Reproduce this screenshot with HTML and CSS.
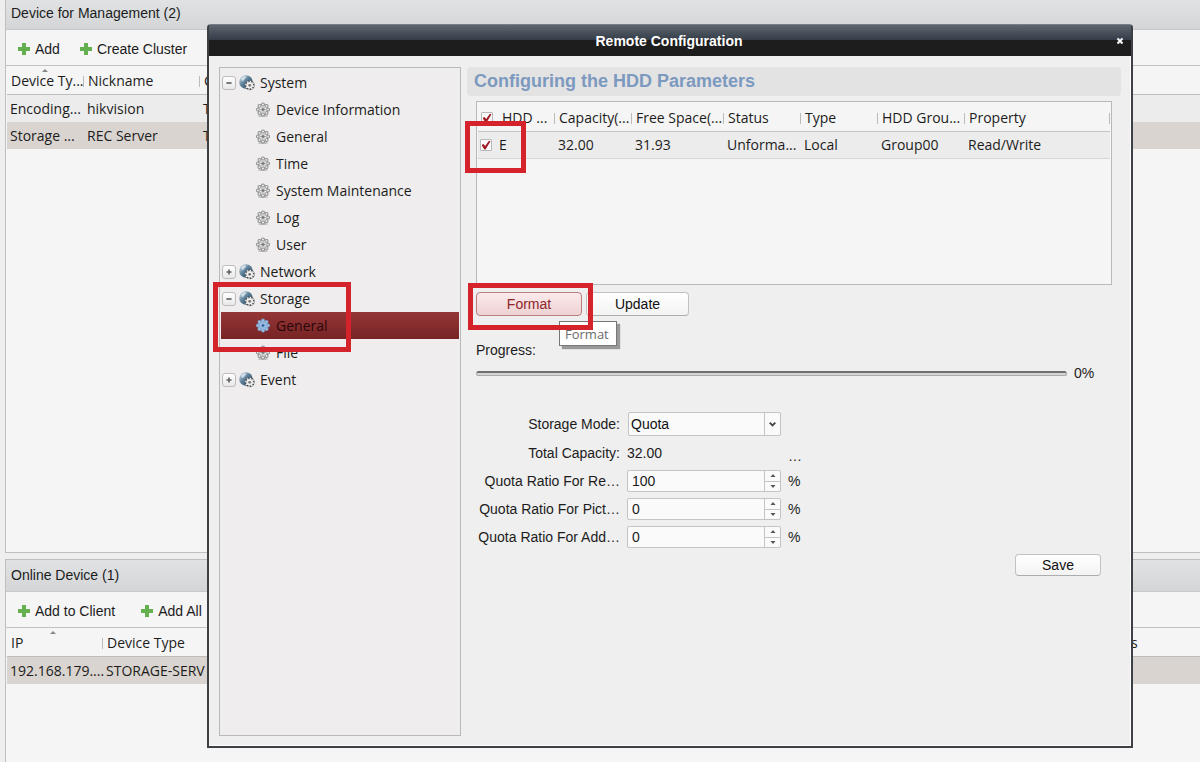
FILE: index.html
```html
<!DOCTYPE html>
<html lang="en">
  <head>
    <meta charset="utf-8">
    <title>Remote Configuration</title>
    <link rel="stylesheet" href="styles.css">
  </head>
  <body>

	<svg class="defs" width="0" height="0">
		<linearGradient id="globeFill" x1="0" y1="0" x2="1" y2="1">
			<stop offset="0" stop-color="#dce8f0" />
			<stop offset="0.45" stop-color="#5c7f99" />
			<stop offset="1" stop-color="#223f56" />
		</linearGradient>
		<symbol id="plus" viewBox="0 0 12 12">
			<path d="M4 0h4v4h4v4H8v4H4V8H0V4h4z" />
		</symbol>
		<symbol id="gear" viewBox="0 0 16 16">
			<ellipse class="gear-shadow" cx="8" cy="14" rx="5" ry="1" />
			<circle class="gear-edge" cx="8" cy="7.5" r="5" pathLength="80" />
			<circle class="gear-teeth" cx="8" cy="7.5" r="5" pathLength="80" />
			<circle class="gear-body" cx="8" cy="7.5" r="4" />
			<path class="gear-spokes" d="M8 4v7M4.500 7.5h7M5.500 5l5 5M10.500 5l-5 5" />
			<circle class="gear-hub" cx="8" cy="7.5" r="1.3" />
		</symbol>
		<symbol id="globe" viewBox="0 0 16 16">
			<circle cx="7" cy="7" r="6.8" fill="url(#globeFill)" />
			<path d="M2 3.5q2-2.5 5-2.3q1 1.5-1 2.3q-1 2.5-3 2.5z" fill="#eef5f9" opacity="0.7" />
			<circle cx="10.7" cy="10.3" r="4.9" fill="#4a4f54" />
			<circle cx="10.7" cy="10.3" r="3.9" fill="none" stroke="#f0f0f0" stroke-width="1.5" stroke-dasharray="5 5" pathLength="80" />
			<circle cx="10.7" cy="10.3" r="3.3" fill="#f0f0f0" />
			<circle cx="10.7" cy="10.3" r="1.4" fill="#777" />
		</symbol>
	</svg>

	<main class="page">
		<section class="panel">
			<h2 class="panel-title first">Device for Management (2)</h2>
			<div class="toolbar">
				<button><svg class="plus"><use href="#plus" /></svg>Add</button>
				<button><svg class="plus"><use href="#plus" /></svg>Create Cluster</button>
			</div>
			<table class="list devices">
				<tr><th class="sorted">Device Ty...</th><th>Nickname</th><th>C</th></tr>
				<tr><td>Encoding...</td><td>hikvision</td><td>T</td></tr>
				<tr class="picked"><td>Storage ...</td><td>REC Server</td><td>T</td></tr>
			</table>
		</section>
		<section class="panel">
			<h2 class="panel-title">Online Device (1)</h2>
			<div class="toolbar wide">
				<button><svg class="plus"><use href="#plus" /></svg>Add to Client</button>
				<button><svg class="plus"><use href="#plus" /></svg>Add All</button>
			</div>
			<table class="list online">
				<tr><th class="sorted">IP</th><th>Device Type</th><th>s</th></tr>
				<tr class="picked"><td>192.168.179....</td><td>STORAGE-SERV</td><td></td></tr>
			</table>
		</section>
	</main>

	<div class="overlay">
		<div class="dialog" role="dialog" aria-labelledby="dialogTitle">
			<header class="titlebar">
				<h1 id="dialogTitle">Remote Configuration</h1>
				<button class="close" aria-label="Close"><svg viewBox="0 0 8 8"><path d="M1.5 1.5l5 5M6.5 1.5l-5 5" /></svg></button>
			</header>
			<div class="dialog-body">

				<nav class="tree">
					<ul>
						<li>
							<div class="node"><button class="toggle" aria-label="Collapse System"><svg viewBox="0 0 14 14"><path d="M4 7h6" /></svg></button><svg class="icon"><use href="#globe" /></svg><a href="#system">System</a></div>
							<ul>
								<li class="leaf"><svg class="icon"><use href="#gear" /></svg><a href="#info">Device Information</a></li>
								<li class="leaf"><svg class="icon"><use href="#gear" /></svg><a href="#general">General</a></li>
								<li class="leaf"><svg class="icon"><use href="#gear" /></svg><a href="#time">Time</a></li>
								<li class="leaf"><svg class="icon"><use href="#gear" /></svg><a href="#maintenance">System Maintenance</a></li>
								<li class="leaf"><svg class="icon"><use href="#gear" /></svg><a href="#log">Log</a></li>
								<li class="leaf"><svg class="icon"><use href="#gear" /></svg><a href="#user">User</a></li>
							</ul>
						</li>
						<li>
							<div class="node"><button class="toggle" aria-label="Expand Network"><svg viewBox="0 0 14 14"><path d="M4 7h6M7 4v6" /></svg></button><svg class="icon"><use href="#globe" /></svg><a href="#network">Network</a></div>
						</li>
						<li class="marked">
							<div class="node"><button class="toggle" aria-label="Collapse Storage"><svg viewBox="0 0 14 14"><path d="M4 7h6" /></svg></button><svg class="icon"><use href="#globe" /></svg><a href="#storage">Storage</a></div>
							<ul>
								<li class="leaf active"><svg class="icon"><use href="#gear" /></svg><a href="#storage-general">General</a></li>
								<li class="leaf"><svg class="icon"><use href="#gear" /></svg><a href="#file">File</a></li>
							</ul>
							<span class="mark mark-tree"></span>
						</li>
						<li>
							<div class="node"><button class="toggle" aria-label="Expand Event"><svg viewBox="0 0 14 14"><path d="M4 7h6M7 4v6" /></svg></button><svg class="icon"><use href="#globe" /></svg><a href="#event">Event</a></div>
						</li>
					</ul>
				</nav>

				<div class="content">
					<h2 class="heading">Configuring the HDD Parameters</h2>

					<div class="settings">
						<div class="hdd-box">
							<table class="list hdd">
								<tr>
									<th><label><input type="checkbox" checked>HDD ...</label></th>
									<th>Capacity(...</th><th>Free Space(...</th><th>Status</th><th>Type</th><th>HDD Grou...</th><th>Property</th>
								</tr>
								<tr>
									<td class="marked"><label><input type="checkbox" checked>E</label><span class="mark mark-check"></span></td>
									<td>32.00</td><td>31.93</td><td>Unforma...</td><td>Local</td><td>Group00</td><td>Read/Write</td>
								</tr>
							</table>
						</div>

						<div class="actions marked">
							<button class="btn hot">Format</button>
							<button class="btn">Update</button>
							<span class="tooltip" role="tooltip">Format</span>
							<span class="mark mark-format"></span>
						</div>

						<div class="progress-label">Progress:</div>
						<div class="progress">
							<div class="bar" role="progressbar" aria-label="Progress" aria-valuenow="0"></div>
							<span>0%</span>
						</div>

						<form class="quota">
							<label for="mode">Storage Mode:</label>
							<div class="select">
								<select id="mode"><option>Quota</option></select>
								<svg viewBox="0 0 16 22"><path d="M5 9.5l3 3l3-3" /></svg>
							</div>
							<span></span>

							<span class="name">Total Capacity:</span>
							<span class="total">32.00</span>
							<span class="dots">…</span>

							<label for="record">Quota Ratio For Re…</label>
							<div class="spin">
								<input id="record" type="text" value="100">
								<div><button type="button" aria-label="Up"><svg viewBox="0 0 6 4"><path d="M3 0l2.5 3h-5z" /></svg></button><button type="button" aria-label="Down"><svg viewBox="0 0 6 4"><path d="M3 4l2.5-3h-5z" /></svg></button></div>
							</div>
							<span>%</span>

							<label for="picture">Quota Ratio For Pict…</label>
							<div class="spin">
								<input id="picture" type="text" value="0">
								<div><button type="button" aria-label="Up"><svg viewBox="0 0 6 4"><path d="M3 0l2.5 3h-5z" /></svg></button><button type="button" aria-label="Down"><svg viewBox="0 0 6 4"><path d="M3 4l2.5-3h-5z" /></svg></button></div>
							</div>
							<span>%</span>

							<label for="additional">Quota Ratio For Add…</label>
							<div class="spin">
								<input id="additional" type="text" value="0">
								<div><button type="button" aria-label="Up"><svg viewBox="0 0 6 4"><path d="M3 0l2.5 3h-5z" /></svg></button><button type="button" aria-label="Down"><svg viewBox="0 0 6 4"><path d="M3 4l2.5-3h-5z" /></svg></button></div>
							</div>
							<span>%</span>
						</form>

						<div class="save-row"><button class="btn save">Save</button></div>
					</div>
				</div>

			</div>
		</div>
	</div>

  </body>
</html>
```
FILE: styles.css
```css
* { box-sizing: border-box; }
body { margin: 0; background: #efeeee; color: #1c1c1c; font: 14px/20px "Liberation Sans", Arial, sans-serif; }
ul, h1, h2 { margin: 0; padding: 0; list-style: none; }
button, input, select { font: inherit; color: inherit; margin: 0; padding: 0; }
button { border: none; background: none; }
a { color: inherit; text-decoration: none; }
.defs { position: absolute; }

/* device lists */
.page { min-height: 100vh; display: grid; grid-template-rows: 553fr 203fr; gap: 6px; padding-left: 5px; }
.panel { border: 1px solid #bfbfc1; border-right: none; background: #f5f5f5; min-width: 0; }
.panel:first-child { border-top: none; }
.panel:last-child { border-bottom: none; }
.panel-title { height: 32px; padding: 5px; border-bottom: 1px solid #c6c8ca; background: linear-gradient(#e1e2e4, #d3d5d7); font-size: 14px; font-weight: normal; }
.panel-title.first { height: 30px; padding-top: 3px; }
.toolbar { height: 36px; display: flex; align-items: center; gap: 20px; padding: 2px 12px 0; border-bottom: 1px solid #c2c2c2; }
.toolbar.wide { gap: 26px; }
.toolbar button { display: flex; align-items: center; gap: 5px; }
.plus { width: 12px; height: 12px; fill: #64b04e; }

.list { width: 100%; table-layout: fixed; border-collapse: separate; border-spacing: 0; font-family: "Open Sans", "Noto Sans", sans-serif; font-size: 14px; }
.panel .list { padding-left: 1px; }
.list th { height: 29px; padding: 2px 0 0 4px; border-bottom: 1px solid #bdbdbd; font-weight: normal; text-align: left; white-space: nowrap; background: linear-gradient(#bbb, #bbb) right 60% / 1px 11px no-repeat; }
.list td { height: 27px; padding: 0 0 0 3px; white-space: nowrap; background: #ececec; }
.list .picked td { background: #d9d4cf; }
.panel .list th:last-child { background: none; }
.sorted { position: relative; }
.sorted::before { content: ""; position: absolute; top: 3px; left: 45%; border: 3px solid transparent; border-top: none; border-bottom-color: #888; }
.devices th:nth-child(1) { width: 77px; }
.devices th:nth-child(2) { width: 116px; }
.online th:nth-child(1) { width: 96px; }
.online th:nth-child(3) { width: 73px; }

/* dialog */
.overlay { position: absolute; inset: 0; display: flex; padding: 24px 67px 14px 207px; }
.dialog { flex: 1; display: flex; flex-direction: column; border: 2px solid #3d4145; border-top: 1px solid #777d84; border-radius: 4px 4px 0 0; background: #efefef; box-shadow: inset -1px -1px #fff; }
.titlebar { height: 31px; display: flex; align-items: center; padding: 0 7px 0 13px; background: linear-gradient(#5d656f, #333b46 50%, #1d1d1d 50%); color: #fff; }
.titlebar h1 { flex: 1; font-size: 14px; text-align: center; }
.close { width: 8px; height: 20px; display: flex; align-items: center; }
.close svg { width: 8px; height: 8px; fill: none; stroke: #fff; stroke-width: 2; }
.dialog-body { flex: 1; display: flex; gap: 6px; padding: 11px 10px 10px; }

.tree { width: 242px; border: 1px solid #b9b9b9; background: #efeded; padding: 1px; font-family: "Open Sans", "Noto Sans", sans-serif; }
.node, .leaf { height: 27px; display: flex; align-items: center; gap: 5px; }
.node { gap: 3px; padding-left: 1px; }
.leaf { padding-left: 34px; }
.node a { margin-left: 2px; }
.icon { width: 16px; height: 16px; }
.toggle { width: 14px; height: 14px; border: 1px solid #bcbcbc; border-radius: 3px; background: linear-gradient(#fff, #e8e8e8); display: flex; }
.toggle svg { width: 12px; height: 12px; stroke: #666; stroke-width: 2; }

/* gear colours switch with the selected row */
.leaf { --gear-edge: #8c8c8c; --gear-fill: #efefef; --gear-line: #a8a8a8; --gear-hub: #777; --gear-shadow: #bdbdbd; }
.active { --gear-edge: #7f9fc8; --gear-fill: #a5c8ea; --gear-line: #86acd6; --gear-hub: #2f5f9a; --gear-shadow: transparent; background: linear-gradient(#953637, #772324); color: #2a0708; }
.gear-shadow { fill: var(--gear-shadow); }
.gear-edge { fill: none; stroke: var(--gear-edge); stroke-width: 4; stroke-linecap: round; stroke-dasharray: 0 10; }
.gear-teeth { fill: none; stroke: var(--gear-fill); stroke-width: 2; stroke-linecap: round; stroke-dasharray: 0 10; }
.gear-body { fill: var(--gear-fill); stroke: var(--gear-line); }
.gear-spokes { fill: none; stroke: var(--gear-line); }
.gear-hub { fill: var(--gear-hub); }

.content { flex: 1; min-width: 0; }
.heading { height: 29px; padding: 4px 7px; border-radius: 4px; background: #e3e3e3; color: #7c99bf; font-size: 18px; white-space: nowrap; }
.settings { padding: 5px 9px 0; }
.hdd-box { height: 184px; border: 1px solid #b9b9b9; background: #f5f5f5; padding: 1px 1px 0; }
.hdd th { border-bottom-color: #c4c4c4; }
.hdd td { border-bottom: 1px solid #d6d6d6; }
.hdd label { display: flex; align-items: center; gap: 9px; }
.hdd td label { gap: 7px; }
.hdd th:first-child { width: 77px; padding-left: 3px; }
.hdd td:first-child { padding-left: 2px; }
.hdd th:nth-child(2) { width: 77px; }
.hdd th:nth-child(3) { width: 92px; }
.hdd th:nth-child(4) { width: 77px; }
.hdd th:nth-child(5) { width: 77px; }
.hdd th:nth-child(6) { width: 87px; }
.hdd input { appearance: none; width: 12px; height: 12px; border: 1px solid #b8b8b8; border-radius: 1px; background: #fafafa; display: grid; place-items: center; }
.hdd input:checked::before { content: ""; width: 9px; height: 9px; background: #a01c24; clip-path: polygon(0 50%, 22% 38%, 40% 62%, 85% 0, 100% 8%, 45% 100%, 32% 100%); }

.actions { display: flex; gap: 4px; padding-top: 7px; }
.btn { width: 103px; height: 24px; border: 1px solid #c2c2c2; border-bottom-color: #adadad; border-radius: 4px; background: linear-gradient(#fff, #f3f3f3); color: #111; }
.hot { width: 106px; border-color: #bd7c7e; background: linear-gradient(#fbeaea, #eed2d3); color: #8f2529; }
.tooltip { position: absolute; z-index: 1; left: 83px; top: 36px; width: 58px; height: 25px; padding: 2px 5px; border: 1px solid #777; background: #fff; box-shadow: 3px 3px 1px #999; color: #6b6b6b; font-family: "Open Sans", "Noto Sans", sans-serif; font-size: 13px; }

/* red call-outs */
.marked { position: relative; }
.mark { position: absolute; z-index: 2; border: 5px solid #d5232c; pointer-events: none; }
.mark-tree { left: -8px; top: -3px; width: 138px; height: 70px; }
.mark-check { left: -13px; top: -11px; width: 61px; height: 52px; }
.mark-format { left: -8px; top: -2px; width: 125px; height: 47px; }

.progress-label { padding-top: 24px; }
.progress { display: flex; align-items: center; gap: 7px; padding-top: 3px; }
.progress span { width: 38px; }
.bar { flex: 1; height: 5px; border: 1px solid #aaa; border-top: 2px solid #707070; border-radius: 3px; background: #d5d5d5; }

.quota { display: grid; grid-template-columns: 144px 154px 1fr; gap: 6px 7px; align-items: center; padding-top: 29px; }
.quota > label, .name { text-align: right; white-space: nowrap; }
.dots { padding-top: 6px; line-height: 16px; }
.total { line-height: 20px; }
.select { position: relative; height: 24px; margin-left: 1px; }
.select select { appearance: none; width: 100%; height: 24px; padding-left: 2px; border: 1px solid #c4c4c4; border-radius: 2px; background: #fafafa; color: #111; }
.select svg { position: absolute; right: 1px; top: 1px; width: 16px; height: 22px; border-left: 1px solid #c4c4c4; fill: none; stroke: #444; stroke-width: 2; pointer-events: none; }
.spin { height: 22px; display: flex; border: 1px solid #c4c4c4; border-radius: 2px; background: #fafafa; }
.spin input { flex: 1; min-width: 0; padding-left: 4px; border: none; background: none; outline: none; }
.spin div { width: 16px; display: flex; flex-direction: column; border-left: 1px solid #c4c4c4; }
.spin button { flex: 1; display: flex; align-items: center; justify-content: center; }
.spin button + button { border-top: 1px solid #c4c4c4; }
.spin svg { width: 6px; height: 4px; fill: #555; }

.save-row { display: flex; justify-content: flex-end; padding: 6px 11px 0 0; }
.save { width: 86px; height: 22px; }
```
